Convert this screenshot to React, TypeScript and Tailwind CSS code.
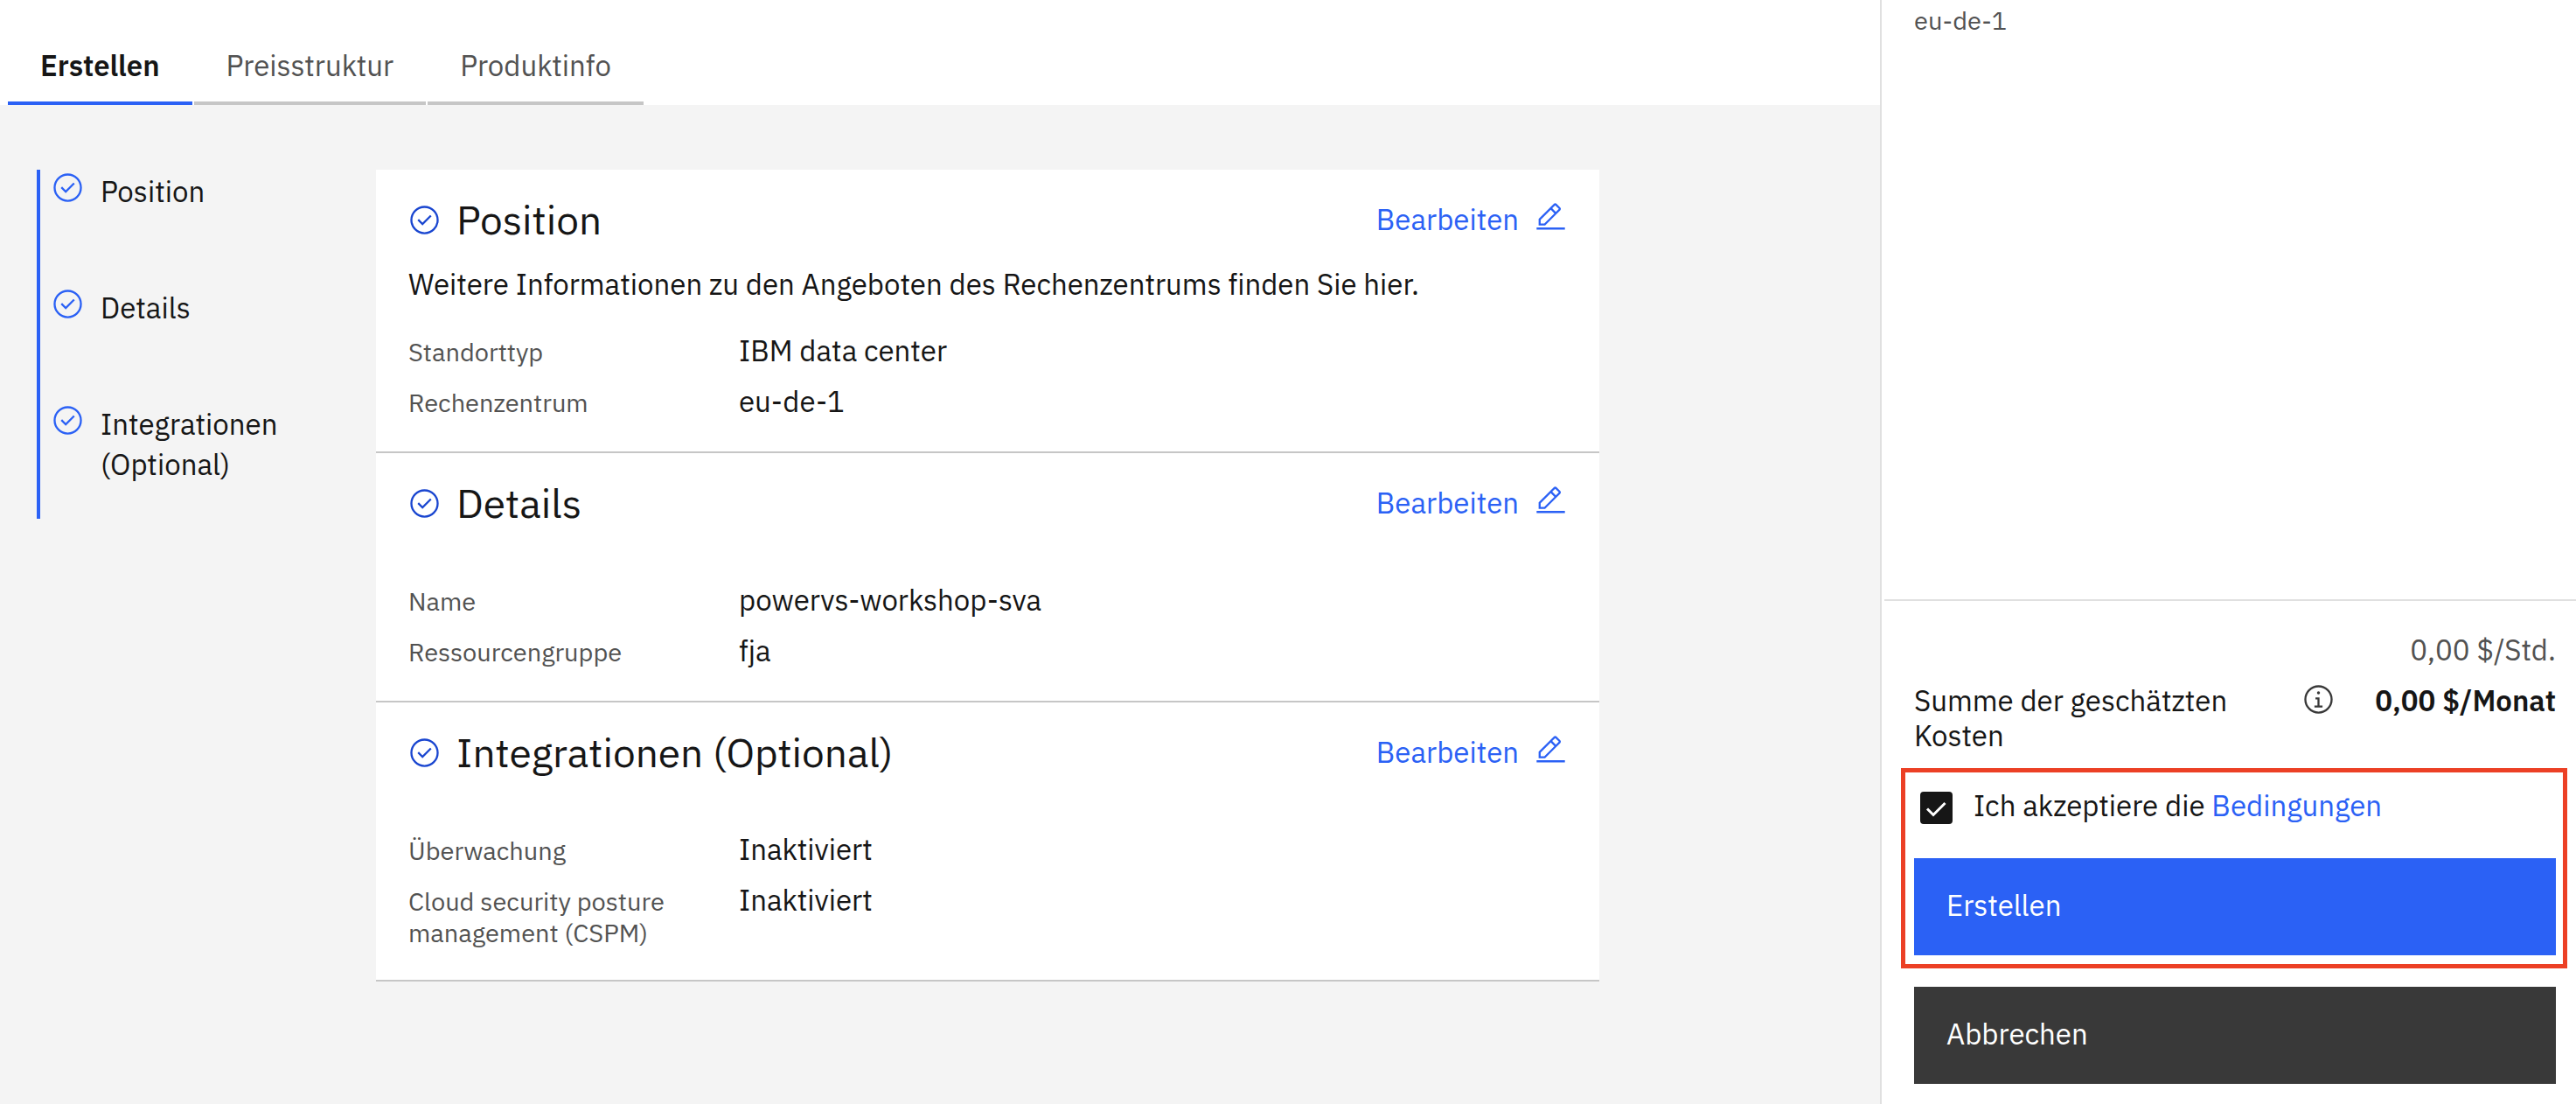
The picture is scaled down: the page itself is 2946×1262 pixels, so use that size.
import { useState } from "react";
import type { ReactNode } from "react";

const tabs = ["Erstellen", "Preisstruktur", "Produktinfo"];
const steps = ["Position", "Details", "Integrationen (Optional)"];

function CheckIcon({ className }: { className: string }) {
  return (
    <svg viewBox="0 0 32 32" fill="currentColor" aria-hidden="true" className={`size-[37px] shrink-0 ${className}`}>
      <path d="M14 21.414 9 16.413 10.413 15 14 18.586 21.585 11 23 12.415z" />
      <path d="M16,2A14,14,0,1,0,30,16,14,14,0,0,0,16,2Zm0,26A12,12,0,1,1,28,16,12,12,0,0,1,16,28Z" />
    </svg>
  );
}

function EditIcon() {
  return (
    <svg viewBox="0 0 32 32" fill="currentColor" aria-hidden="true" className="size-[37px] shrink-0">
      <path d="M2 26h28v2H2z" />
      <path d="M25.4,9c0.8-0.8,0.8-2,0-2.8l-3.6-3.6c-0.8-0.8-2-0.8-2.8,0l-15,15V24h6.4L25.4,9z M20.4,4L24,7.6l-3,3L17.4,7L20.4,4z M6,22v-3.6l10-10l3.6,3.6l-10,10H6z" />
    </svg>
  );
}

function InfoIcon() {
  return (
    <svg viewBox="0 0 32 32" fill="currentColor" aria-hidden="true" className="size-[37px]">
      <path d="M17 22V14H13v2h2v6H12v2h8V22z" />
      <path d="M16,8a1.5,1.5,0,1,0,1.5,1.5A1.5,1.5,0,0,0,16,8Z" />
      <path d="M16,30A14,14,0,1,1,30,16,14,14,0,0,1,16,30ZM16,4A12,12,0,1,0,28,16,12,12,0,0,0,16,4Z" />
    </svg>
  );
}

function Section({ title, rows, children }: { title: string; rows: [string, string][]; children?: ReactNode }) {
  return (
    <section className="border-b-2 border-[#c6c6c6] bg-white px-[37px] pt-[28px] pb-[36px]">
      <div className="flex items-center justify-between">
        <h2 className="flex items-center gap-[18px] text-[46px] leading-[58px]">
          <CheckIcon className="text-[#1a46d0]" />
          {title}
        </h2>
        <button type="button" className="flex items-start gap-[18px] leading-[42px] text-[#2b61f5]">
          Bearbeiten
          <EditIcon />
        </button>
      </div>
      {children}
      <dl className={`flex flex-col gap-[16px] ${children ? "mt-[32px]" : "mt-[61px]"}`}>
        {rows.map(([label, value]) => (
          <div key={label} className="grid grid-cols-[378px_1fr] items-baseline">
            <dt className="pr-[60px] text-[29px] leading-[36px] text-[#525252]">{label}</dt>
            <dd className="leading-[42px]">{value}</dd>
          </div>
        ))}
      </dl>
    </section>
  );
}

export default function App() {
  const [active, setActive] = useState(tabs[0]);
  const [accepted, setAccepted] = useState(true);

  return (
    <div className="flex min-h-screen bg-white font-['IBM_Plex_Sans','Noto_Sans',sans-serif] text-[33px] text-[#161616] [font-variant-ligatures:no-common-ligatures]">
      <div className="flex min-w-0 flex-1 flex-col">
        <div role="tablist" className="flex gap-[2px] pl-[9px] pt-[54px]">
          {tabs.map((tab) => (
            <button
              key={tab}
              type="button"
              role="tab"
              aria-selected={active === tab}
              onClick={() => setActive(tab)}
              className={`border-b-4 px-[37px] pb-[20px] leading-[42px] ${
                active === tab ? "border-[#2b61f5] font-semibold" : "border-[#c6c6c6] text-[#525252]"
              }`}
            >
              {tab}
            </button>
          ))}
        </div>

        <div className="flex flex-1 items-start bg-[#f4f4f4] pt-[74px] pr-[321px] pl-[42px]">
          <nav className="w-[388px] shrink-0">
            <ol className="border-l-4 border-[#2b61f5]">
              {steps.map((step) => (
                <li key={step} className="flex min-h-[133px] gap-[19px] pt-[2px] pl-[13px] leading-[46px]">
                  <CheckIcon className="text-[#2b61f5]" />
                  <span className="max-w-[240px]">{step}</span>
                </li>
              ))}
            </ol>
          </nav>

          <main className="min-w-0 flex-1">
            <Section
              title="Position"
              rows={[
                ["Standorttyp", "IBM data center"],
                ["Rechenzentrum", "eu-de-1"],
              ]}
            >
              <p className="mt-[22px] leading-[46px]">
                Weitere Informationen zu den Angeboten des Rechenzentrums finden Sie hier.
              </p>
            </Section>
            <Section
              title="Details"
              rows={[
                ["Name", "powervs-workshop-sva"],
                ["Ressourcengruppe", "fja"],
              ]}
            />
            <Section
              title="Integrationen (Optional)"
              rows={[
                ["Überwachung", "Inaktiviert"],
                ["Cloud security posture management (CSPM)", "Inaktiviert"],
              ]}
            />
          </main>
        </div>
      </div>

      <aside className="flex w-[796px] shrink-0 flex-col border-l-2 border-[#e0e0e0]">
        <p className="flex-1 pt-[5px] pl-[37px] text-[29px] leading-[36px] text-[#525252]">eu-de-1</p>

        <div className="ml-[3px] border-t-2 border-[#e0e0e0] pt-[36px] pb-[23px] leading-[40px]">
          <div className="pr-[23px] pl-[34px]">
            <p className="text-right text-[#525252]">0,00 $/Std.</p>
            <div className="mt-[18px] flex items-start">
              <p className="flex-1">Summe der geschätzten Kosten</p>
              <button type="button" aria-label="Information" className="mx-[46px] text-[#393939]">
                <InfoIcon />
              </button>
              <p className="font-semibold">0,00 $/Monat</p>
            </div>
          </div>

          <div className="mt-[17px] mr-[10px] ml-[19px] border-[5px] border-[#ec4025] pt-[17px] pr-[8px] pb-[10px] pl-[10px]">
            <div className="flex items-start gap-[24px] pl-[7px] leading-[42px]">
              <span className="mt-[5px] grid size-[37px] shrink-0">
                <input
                  id="terms"
                  type="checkbox"
                  checked={accepted}
                  onChange={(e) => setAccepted(e.target.checked)}
                  className="peer col-start-1 row-start-1 size-[37px] appearance-none rounded-[4px] border-2 border-[#161616] checked:bg-[#161616]"
                />
                <svg
                  viewBox="0 0 37 37"
                  fill="none"
                  stroke="white"
                  strokeWidth="3"
                  aria-hidden="true"
                  className="pointer-events-none invisible col-start-1 row-start-1 size-[37px] peer-checked:visible"
                >
                  <path d="M8 19.500 15 26.500 28.500 13" />
                </svg>
              </span>
              <label htmlFor="terms">
                Ich akzeptiere die{" "}
                <a href="#bedingungen" className="text-[#2b61f5]">
                  Bedingungen
                </a>
              </label>
            </div>
            <button
              type="button"
              className="mt-[39px] block w-full bg-[#2b61f5] px-[37px] pt-[33px] pb-[36px] text-left leading-[42px] text-white"
            >
              Erstellen
            </button>
          </div>

          <div className="mt-[21px] pr-[23px] pl-[34px]">
            <button
              type="button"
              className="block w-full bg-[#393939] px-[37px] pt-[33px] pb-[36px] text-left leading-[42px] text-white"
            >
              Abbrechen
            </button>
          </div>
        </div>
      </aside>
    </div>
  );
}
